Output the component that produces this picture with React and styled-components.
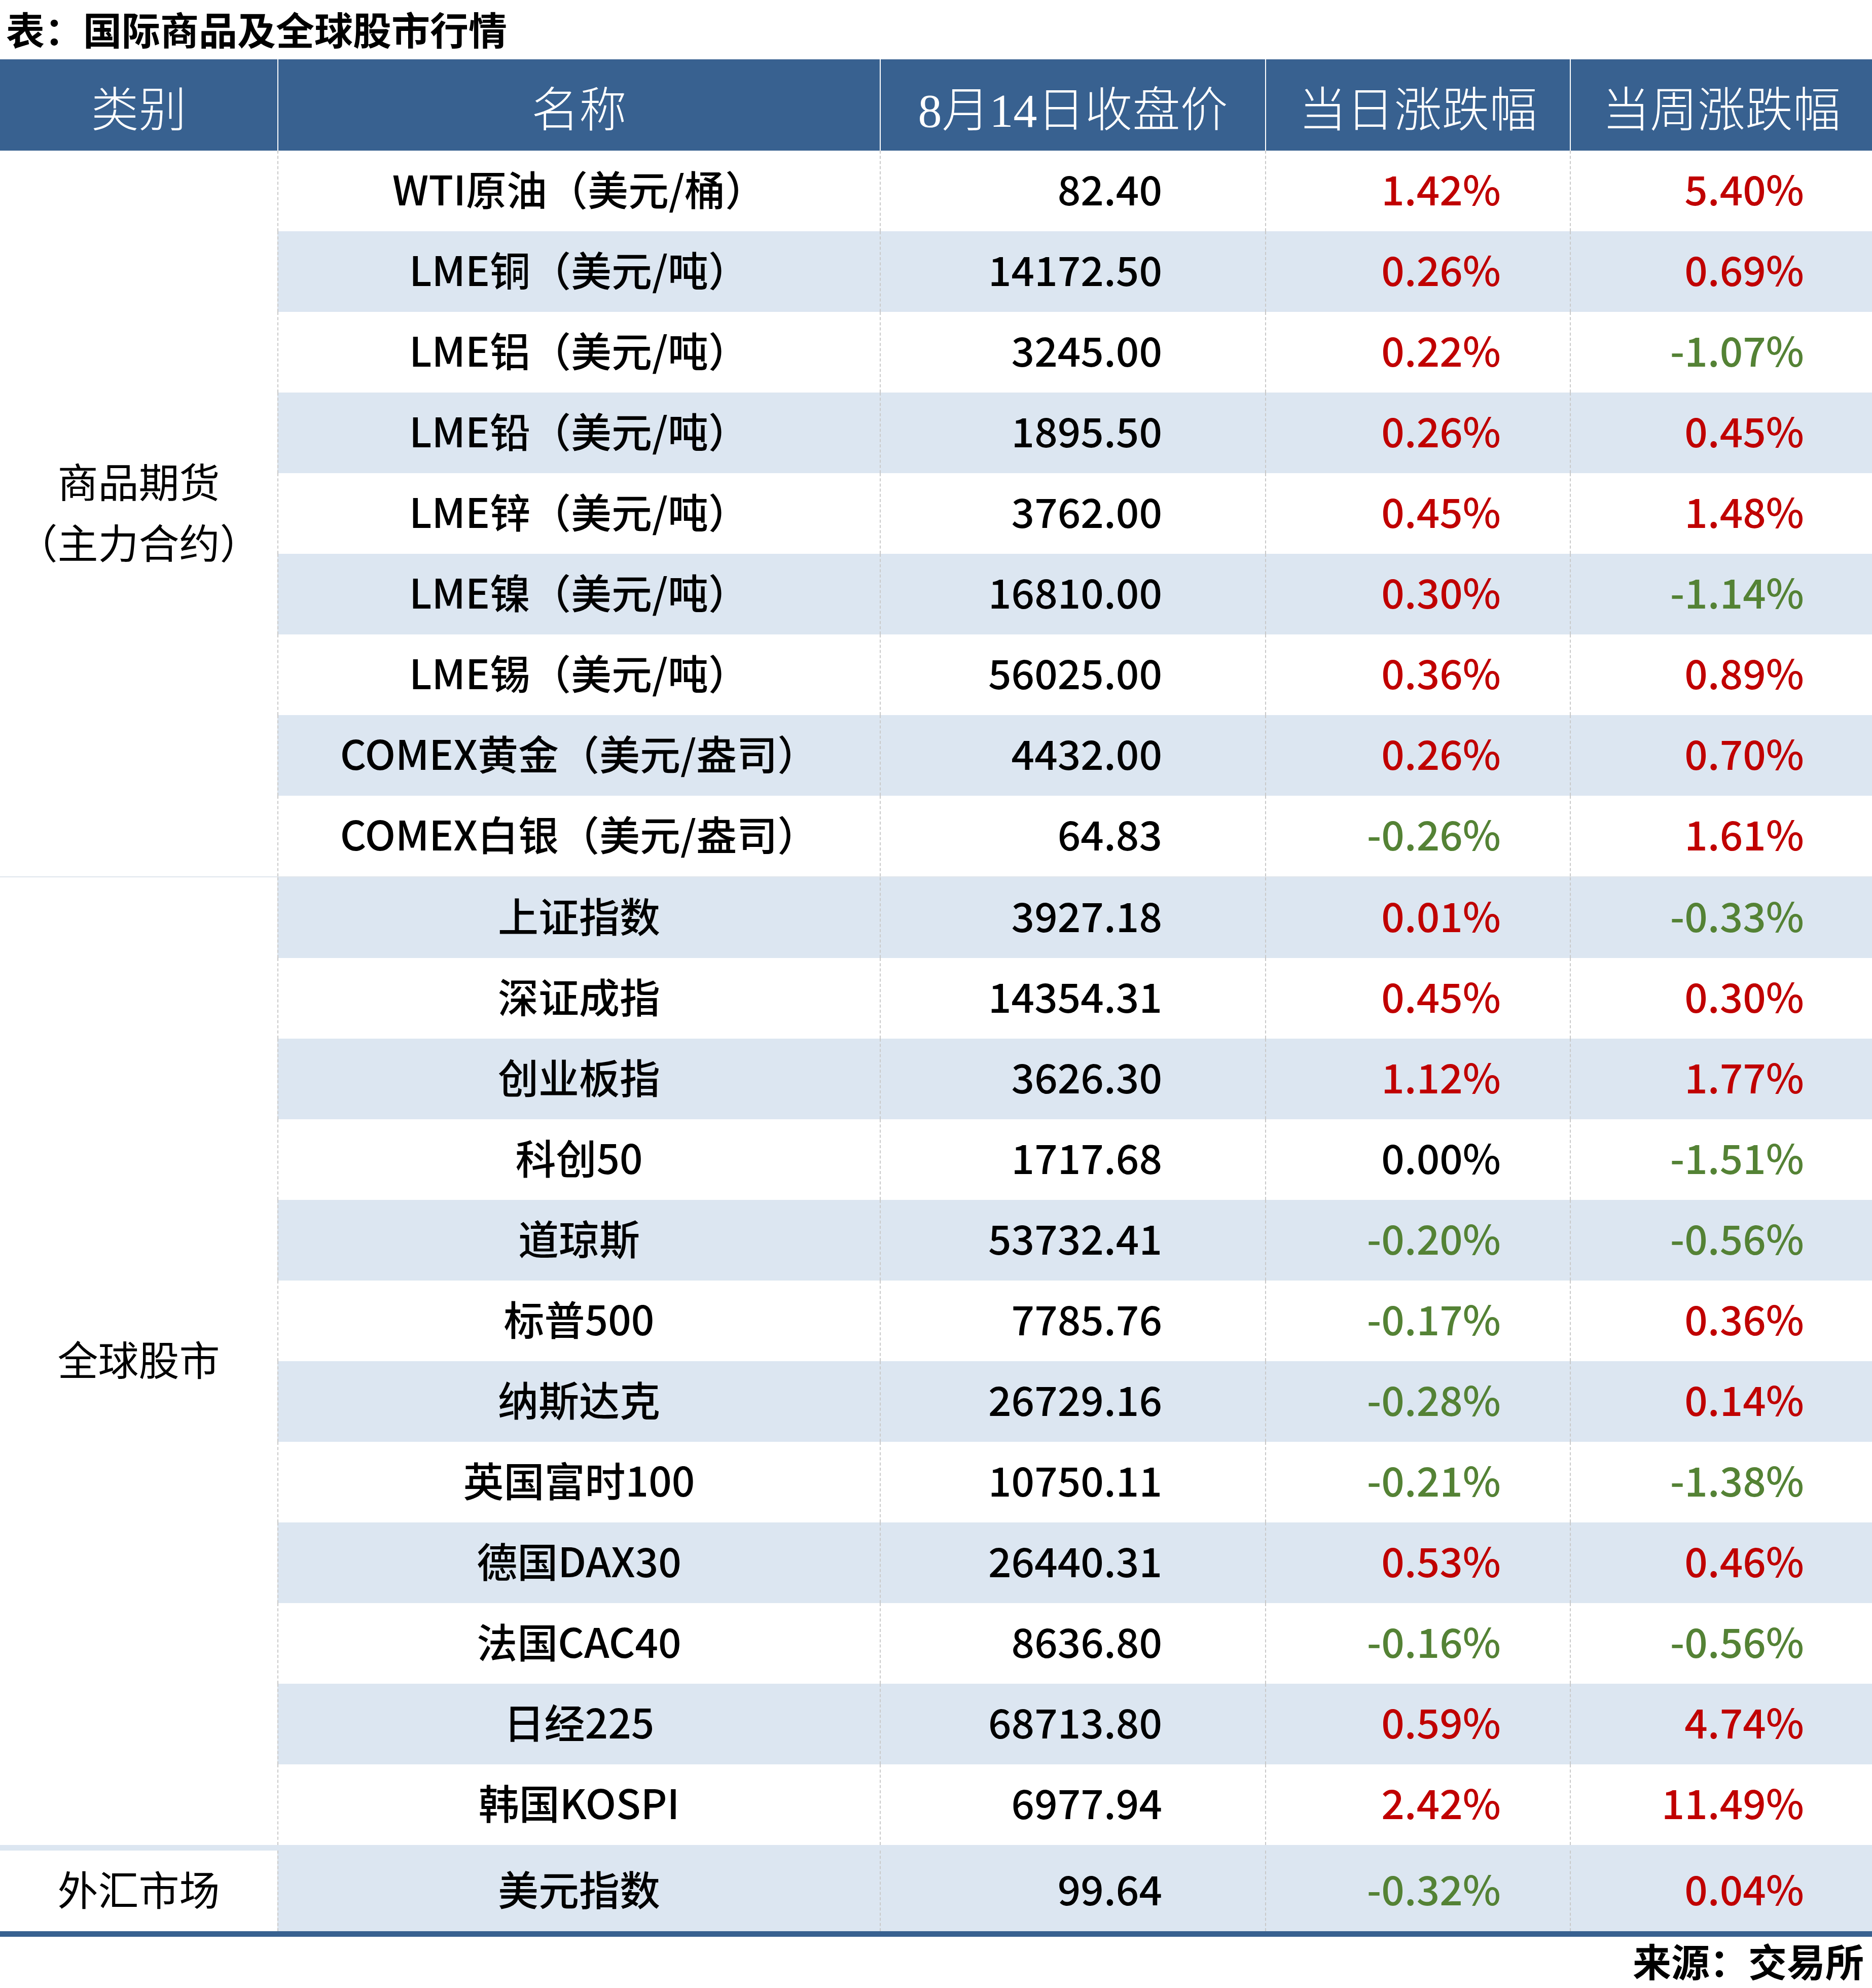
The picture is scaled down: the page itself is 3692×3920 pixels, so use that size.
import React from 'react';
import styled, { createGlobalStyle } from 'styled-components';

const GlobalStyle = createGlobalStyle`
html, body {
  margin: 0;
  padding: 0;
  background: #fff;
}
body {
  width: 3692px;
  font-family: "Noto Sans CJK SC", "Noto Sans", sans-serif;
  color: #000;
}
`;

const HEAD_BLUE = '#386190';
const ROW_BLUE = '#dce6f1';

const Page = styled.div`
width: 3692px;
display: flex;
flex-direction: column;
`;

const Title = styled.h1`
margin: 0 0 5px 0;
padding-left: 12px;
height: 112px;
line-height: 112px;
font-size: 76px;
font-weight: 700;
letter-spacing: 0;
`;

const Table = styled.div`
display: flex;
flex-direction: column;
border-bottom: 11px solid ${HEAD_BLUE};
`;

const HeadRow = styled.div`
display: grid;
grid-template-columns: 547px 1188px 760px 601px 596px;
height: 180px;
background: ${HEAD_BLUE};
`;

const HeadCell = styled.div`
display: flex;
align-items: center;
justify-content: center;
padding-top: 4px;
box-sizing: border-box;
color: #fff;
font-family: "Liberation Serif", "Noto Sans CJK SC", serif;
font-size: 94px;
font-weight: 300;
border-left: ${({ first }) => (first ? 'none' : '2px solid #fff')};
`;

const Group = styled.div`
display: flex;
border-top: ${({ strip }) => (strip ? `11px solid ${ROW_BLUE}` : 'none')};
border-bottom: ${({ line }) => (line ? '2px solid #dfe5ec' : 'none')};
`;

const CategoryCell = styled.div`
width: 547px;
flex: none;
display: flex;
align-items: center;
justify-content: center;
padding-bottom: 14px;
box-sizing: border-box;
text-align: center;
background: #fff;
font-size: 80px;
line-height: 120px;
`;

const Rows = styled.div`
flex: 1;
display: flex;
flex-direction: column;
`;

const DataRow = styled.div`
display: grid;
grid-template-columns: 1188px 760px 601px 596px;
height: 159px;
background: ${({ shaded }) => (shaded ? ROW_BLUE : '#fff')};
`;

const Cell = styled.div`
display: flex;
align-items: center;
justify-content: ${({ align }) => (align === 'right' ? 'flex-end' : 'center')};
padding-right: ${({ pad }) => pad || 0}px;
padding-bottom: 14px;
box-sizing: border-box;
border-left: 2px dashed #c9c9c9;
font-size: 80px;
font-weight: 500;
color: ${({ tone }) => tone || '#000'};
white-space: nowrap;
`;

const Source = styled.div`
text-align: right;
padding-right: 16px;
height: 110px;
line-height: 92px;
font-size: 76px;
font-weight: 700;
`;

const groups = [
  {
    label: ['商品期货', '（主力合约）'],
    rows: [
      ['WTI原油（美元/桶）', '82.40', '1.42%', '5.40%'],
      ['LME铜（美元/吨）', '14172.50', '0.26%', '0.69%'],
      ['LME铝（美元/吨）', '3245.00', '0.22%', '-1.07%'],
      ['LME铅（美元/吨）', '1895.50', '0.26%', '0.45%'],
      ['LME锌（美元/吨）', '3762.00', '0.45%', '1.48%'],
      ['LME镍（美元/吨）', '16810.00', '0.30%', '-1.14%'],
      ['LME锡（美元/吨）', '56025.00', '0.36%', '0.89%'],
      ['COMEX黄金（美元/盎司）', '4432.00', '0.26%', '0.70%'],
      ['COMEX白银（美元/盎司）', '64.83', '-0.26%', '1.61%'],
    ],
  },
  {
    label: ['全球股市'],
    rows: [
      ['上证指数', '3927.18', '0.01%', '-0.33%'],
      ['深证成指', '14354.31', '0.45%', '0.30%'],
      ['创业板指', '3626.30', '1.12%', '1.77%'],
      ['科创50', '1717.68', '0.00%', '-1.51%'],
      ['道琼斯', '53732.41', '-0.20%', '-0.56%'],
      ['标普500', '7785.76', '-0.17%', '0.36%'],
      ['纳斯达克', '26729.16', '-0.28%', '0.14%'],
      ['英国富时100', '10750.11', '-0.21%', '-1.38%'],
      ['德国DAX30', '26440.31', '0.53%', '0.46%'],
      ['法国CAC40', '8636.80', '-0.16%', '-0.56%'],
      ['日经225', '68713.80', '0.59%', '4.74%'],
      ['韩国KOSPI', '6977.94', '2.42%', '11.49%'],
    ],
  },
  {
    label: ['外汇市场'],
    rows: [['美元指数', '99.64', '-0.32%', '0.04%']],
  },
];

const toneOf = (v) => {
  if (v.startsWith('-')) return '#548235';
  if (parseFloat(v) === 0) return '#000';
  return '#c00000';
};

const headers = ['类别', '名称', '8月14日收盘价', '当日涨跌幅', '当周涨跌幅'];

const App = () => {
  let index = 0;
  return (
    <Page>
      <GlobalStyle />
      <Title>表：国际商品及全球股市行情</Title>
      <Table>
        <HeadRow>
          {headers.map((h, i) => (
            <HeadCell key={h} first={i === 0}>{h}</HeadCell>
          ))}
        </HeadRow>
        {groups.map((g, gi) => (
          <Group key={g.label[0]} line={gi === 0} strip={gi === 2}>
            <CategoryCell>
              <div>
                {g.label.map((l) => (
                  <div key={l}>{l}</div>
                ))}
              </div>
            </CategoryCell>
            <Rows>
              {g.rows.map((r) => {
                index += 1;
                return (
                  <DataRow key={r[0]} shaded={index % 2 === 0}>
                    <Cell>{r[0]}</Cell>
                    <Cell align="right" pad={203}>{r[1]}</Cell>
                    <Cell align="right" pad={136} tone={toneOf(r[2])}>{r[2]}</Cell>
                    <Cell align="right" pad={134} tone={toneOf(r[3])}>{r[3]}</Cell>
                  </DataRow>
                );
              })}
            </Rows>
          </Group>
        ))}
      </Table>
      <Source>来源：交易所</Source>
    </Page>
  );
};

export default App;
